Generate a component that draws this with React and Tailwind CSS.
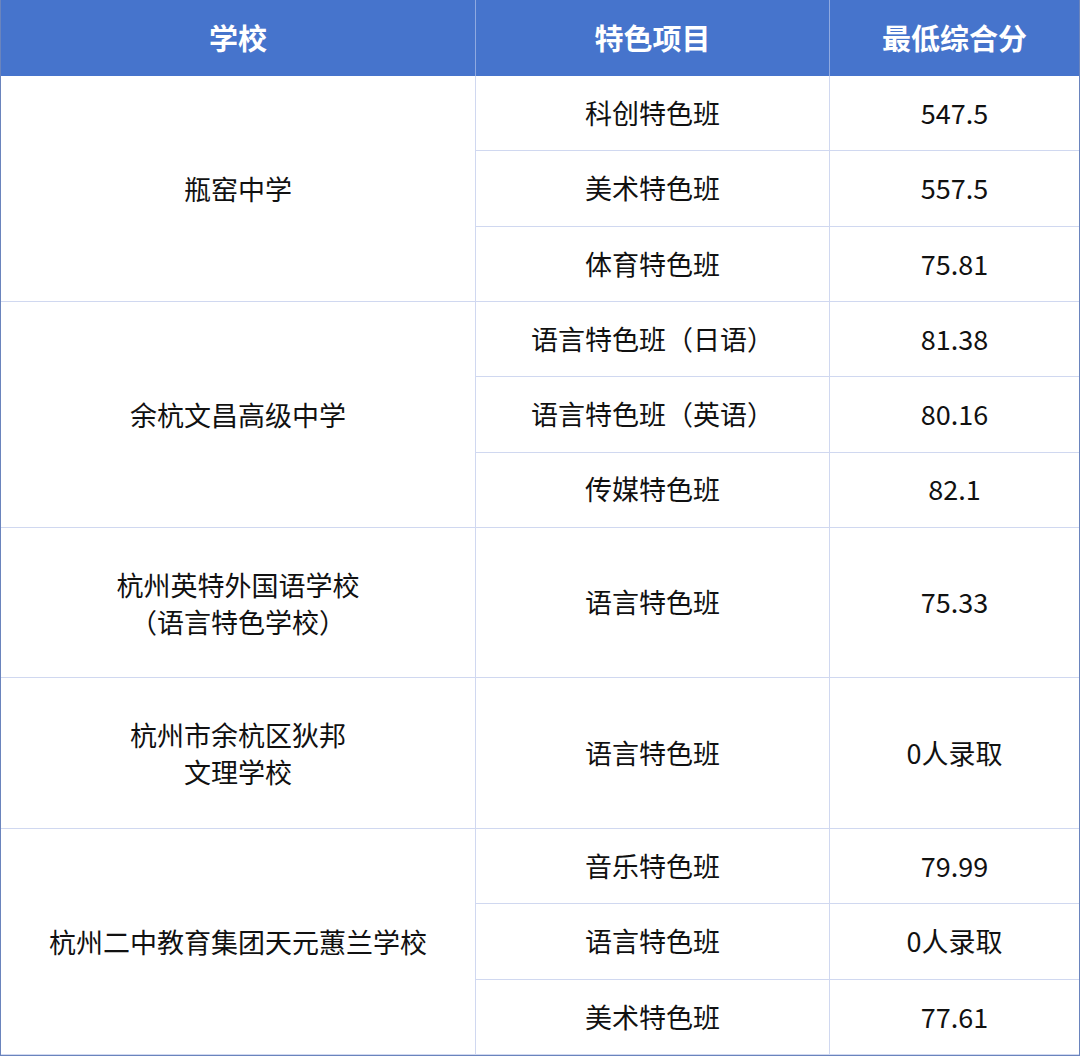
import React from 'react';

const rows = [
  { school: ['瓶窑中学'], items: [['科创特色班', '547.5'], ['美术特色班', '557.5'], ['体育特色班', '75.81']] },
  { school: ['余杭文昌高级中学'], items: [['语言特色班（日语）', '81.38'], ['语言特色班（英语）', '80.16'], ['传媒特色班', '82.1']] },
  { school: ['杭州英特外国语学校', '（语言特色学校）'], items: [['语言特色班', '75.33']], span: 2 },
  { school: ['杭州市余杭区狄邦', '文理学校'], items: [['语言特色班', '0人录取']], span: 2 },
  { school: ['杭州二中教育集团天元蕙兰学校'], items: [['音乐特色班', '79.99'], ['语言特色班', '0人录取'], ['美术特色班', '77.61']] },
];

const spanCls = { 1: 'row-span-1', 2: 'row-span-2', 3: 'row-span-3' };

export default function App() {
  const cells = [];
  rows.forEach((r, i) => {
    const n = r.span || r.items.length;
    cells.push(
      <div key={`s${i}`} className={`${spanCls[n]} col-start-1 flex flex-col items-center justify-center border-r border-b border-[#d0d8f0] leading-[37px] text-center`}>
        {r.school.map((t) => <span key={t}>{t}</span>)}
      </div>
    );
    r.items.forEach(([name, score], j) => {
      const s = r.span && r.items.length === 1 ? r.span : 1;
      cells.push(
        <div key={`n${i}-${j}`} className={`${spanCls[s]} col-start-2 flex items-center justify-center border-r border-b border-[#d0d8f0]`}>
          {name}
        </div>,
        <div key={`v${i}-${j}`} className={`${spanCls[s]} col-start-3 flex items-center justify-center border-b border-[#d0d8f0]`}>
          {score}
        </div>
      );
    });
  });

  return (
    <div className="w-[1080px] h-[1056px] bg-white" style={{ fontFamily: '"Noto Sans CJK SC", "Noto Sans", sans-serif' }}>
      <div className="grid h-full grid-cols-[475px_354px_1fr] grid-rows-[76px_repeat(13,1fr)] border-x border-b border-[#6a84bd] text-[27px] text-[#111111]">
        <div className="flex items-center justify-center bg-[#4674cc] text-[29px] font-bold text-white border-r border-[#8fa9e0]">学校</div>
        <div className="flex items-center justify-center bg-[#4674cc] text-[29px] font-bold text-white border-r border-[#8fa9e0]">特色项目</div>
        <div className="flex items-center justify-center bg-[#4674cc] text-[29px] font-bold text-white">最低综合分</div>
        {cells}
      </div>
    </div>
  );
}
